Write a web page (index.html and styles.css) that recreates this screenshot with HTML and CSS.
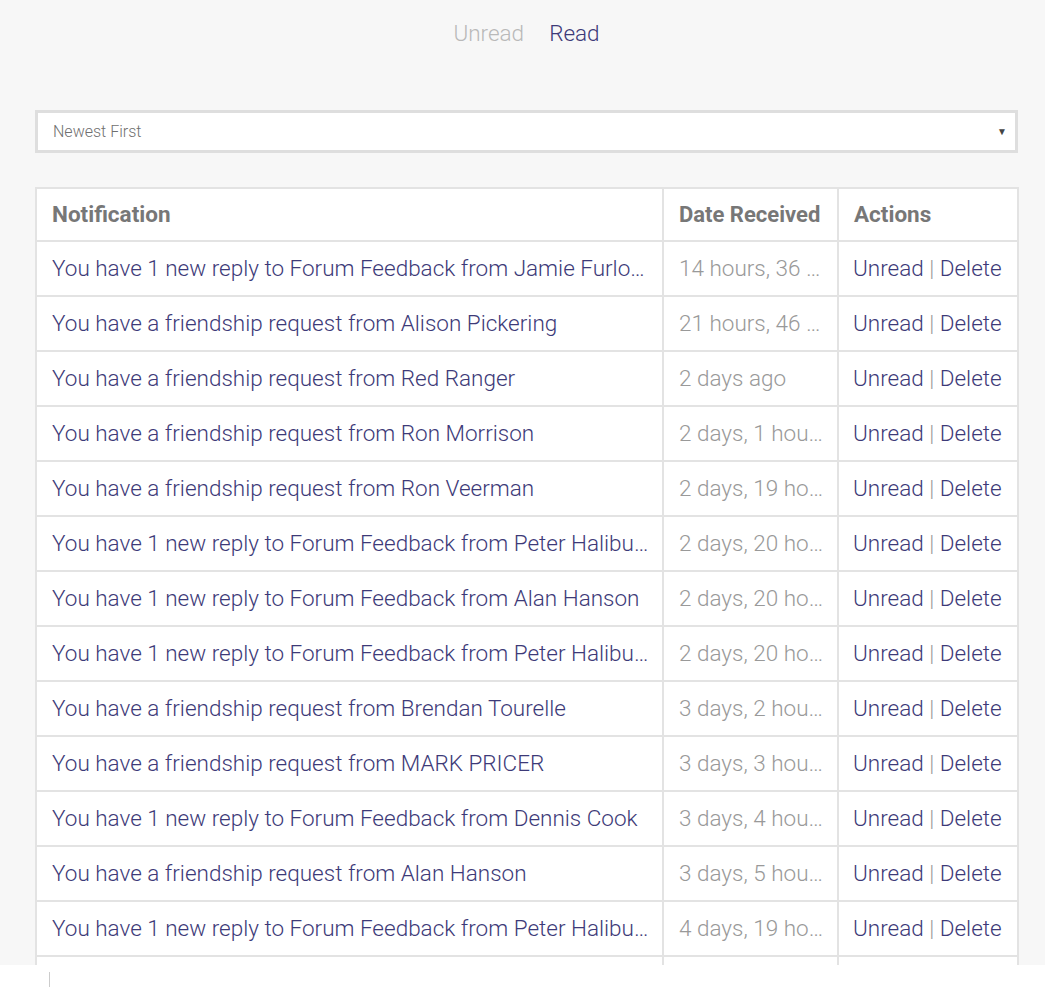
FILE: index.html
```html
<!DOCTYPE html>
<html lang="en">
<head>
<meta charset="utf-8">
<title>Notifications</title>
<link rel="stylesheet" href="styles.css">
</head>
<body>
<div class="page">
  <nav class="tabs">
    <a class="tab tab-muted" href="#">Unread</a>
    <a class="tab tab-active" href="#">Read</a>
  </nav>
  <div class="sort">
    <span class="sort-label">Newest First</span>
    <span class="sort-arrow">&#9660;</span>
  </div>
  <table class="notes">
    <colgroup><col class="c1"><col class="c2"><col class="c3"></colgroup>
    <thead>
      <tr><th>Notification</th><th class="date">Date Received</th><th>Actions</th></tr>
    </thead>
    <tbody>
      <tr><td class="msg"><a href="#">You have 1 new reply to Forum Feedback from Jamie Furlong</a></td><td class="date">14 hours, 36 minutes ago</td><td class="act"><a href="#">Unread</a> <span class="sep">|</span> <a href="#">Delete</a></td></tr>
      <tr><td class="msg"><a href="#">You have a friendship request from Alison Pickering</a></td><td class="date">21 hours, 46 minutes ago</td><td class="act"><a href="#">Unread</a> <span class="sep">|</span> <a href="#">Delete</a></td></tr>
      <tr><td class="msg"><a href="#">You have a friendship request from Red Ranger</a></td><td class="date">2 days ago</td><td class="act"><a href="#">Unread</a> <span class="sep">|</span> <a href="#">Delete</a></td></tr>
      <tr><td class="msg"><a href="#">You have a friendship request from Ron Morrison</a></td><td class="date">2 days, 1 hour ago</td><td class="act"><a href="#">Unread</a> <span class="sep">|</span> <a href="#">Delete</a></td></tr>
      <tr><td class="msg"><a href="#">You have a friendship request from Ron Veerman</a></td><td class="date">2 days, 19 hours ago</td><td class="act"><a href="#">Unread</a> <span class="sep">|</span> <a href="#">Delete</a></td></tr>
      <tr><td class="msg"><a href="#">You have 1 new reply to Forum Feedback from Peter Haliburton</a></td><td class="date">2 days, 20 hours ago</td><td class="act"><a href="#">Unread</a> <span class="sep">|</span> <a href="#">Delete</a></td></tr>
      <tr><td class="msg"><a href="#">You have 1 new reply to Forum Feedback from Alan Hanson</a></td><td class="date">2 days, 20 hours ago</td><td class="act"><a href="#">Unread</a> <span class="sep">|</span> <a href="#">Delete</a></td></tr>
      <tr><td class="msg"><a href="#">You have 1 new reply to Forum Feedback from Peter Haliburton</a></td><td class="date">2 days, 20 hours ago</td><td class="act"><a href="#">Unread</a> <span class="sep">|</span> <a href="#">Delete</a></td></tr>
      <tr><td class="msg"><a href="#">You have a friendship request from Brendan Tourelle</a></td><td class="date">3 days, 2 hours ago</td><td class="act"><a href="#">Unread</a> <span class="sep">|</span> <a href="#">Delete</a></td></tr>
      <tr><td class="msg"><a href="#">You have a friendship request from MARK PRICER</a></td><td class="date">3 days, 3 hours ago</td><td class="act"><a href="#">Unread</a> <span class="sep">|</span> <a href="#">Delete</a></td></tr>
      <tr><td class="msg"><a href="#">You have 1 new reply to Forum Feedback from Dennis Cook</a></td><td class="date">3 days, 4 hours ago</td><td class="act"><a href="#">Unread</a> <span class="sep">|</span> <a href="#">Delete</a></td></tr>
      <tr><td class="msg"><a href="#">You have a friendship request from Alan Hanson</a></td><td class="date">3 days, 5 hours ago</td><td class="act"><a href="#">Unread</a> <span class="sep">|</span> <a href="#">Delete</a></td></tr>
      <tr><td class="msg"><a href="#">You have 1 new reply to Forum Feedback from Peter Haliburton</a></td><td class="date">4 days, 19 hours ago</td><td class="act"><a href="#">Unread</a> <span class="sep">|</span> <a href="#">Delete</a></td></tr>
      <tr><td class="msg"><a href="#">You have a friendship request from Jamie Furlong</a></td><td class="date">5 days ago</td><td class="act"><a href="#">Unread</a> <span class="sep">|</span> <a href="#">Delete</a></td></tr>
    </tbody>
  </table>
</div>
<div class="below"><span class="cursor"></span></div>
</body>
</html>
```

FILE: styles.css
```css
html, body {
  margin: 0;
  padding: 0;
  background: #ffffff;
  font-family: Roboto, "Liberation Sans", sans-serif;
}

.page {
  height: 965px;
  overflow: hidden;
  box-sizing: border-box;
  background: #f7f7f7;
  padding: 17px 27px 0 35px;
}

.tabs {
  display: flex;
  justify-content: center;
  gap: 25px;
  font-size: 22.5px;
  font-weight: 300;
  line-height: 33px;
}

.tab {
  text-decoration: none;
}

.tab-muted { color: #b9b9b9; }
.tab-active { color: #3d3a78; }

.sort {
  margin-top: 60px;
  height: 43px;
  box-sizing: border-box;
  border: 3px solid #dedede;
  background: #ffffff;
  display: flex;
  align-items: center;
  justify-content: space-between;
  padding: 0 8px 0 15px;
  font-size: 16px;
  font-weight: 300;
  color: #6f6f6f;
}

.sort-arrow {
  font-size: 10px;
  color: #444444;
}

.notes {
  margin-top: 34px;
  width: 982px;
  table-layout: fixed;
  border-collapse: collapse;
  background: #ffffff;
  font-size: 22.5px;
  line-height: 25px;
}

.c1 { width: 627px; }
.c2 { width: 175px; }
.c3 { width: 180px; }

.notes th,
.notes td {
  border: 2px solid #e3e3e3;
  padding: 14px 15px;
  text-align: left;
  white-space: nowrap;
  overflow: hidden;
  text-overflow: ellipsis;
}

.notes th {
  padding: 13px 15px 13px;
  font-weight: 700;
  color: #777777;
}

.notes th.date { padding-right: 6px; font-size: 22px; }

.notes td {
  font-weight: 300;
  color: #3d3a78;
}

.notes td.msg { padding-right: 9px; }

.notes td.date { color: #999999; padding-right: 12px; }

.notes td.act { padding-left: 14px; padding-right: 8px; }

.notes a {
  color: #3d3a78;
  text-decoration: none;
}

.sep { color: #999999; }

.below {
  height: 22px;
  position: relative;
}

.cursor {
  position: absolute;
  left: 49px;
  top: 7px;
  width: 1px;
  height: 15px;
  background: #cccccc;
}
```
